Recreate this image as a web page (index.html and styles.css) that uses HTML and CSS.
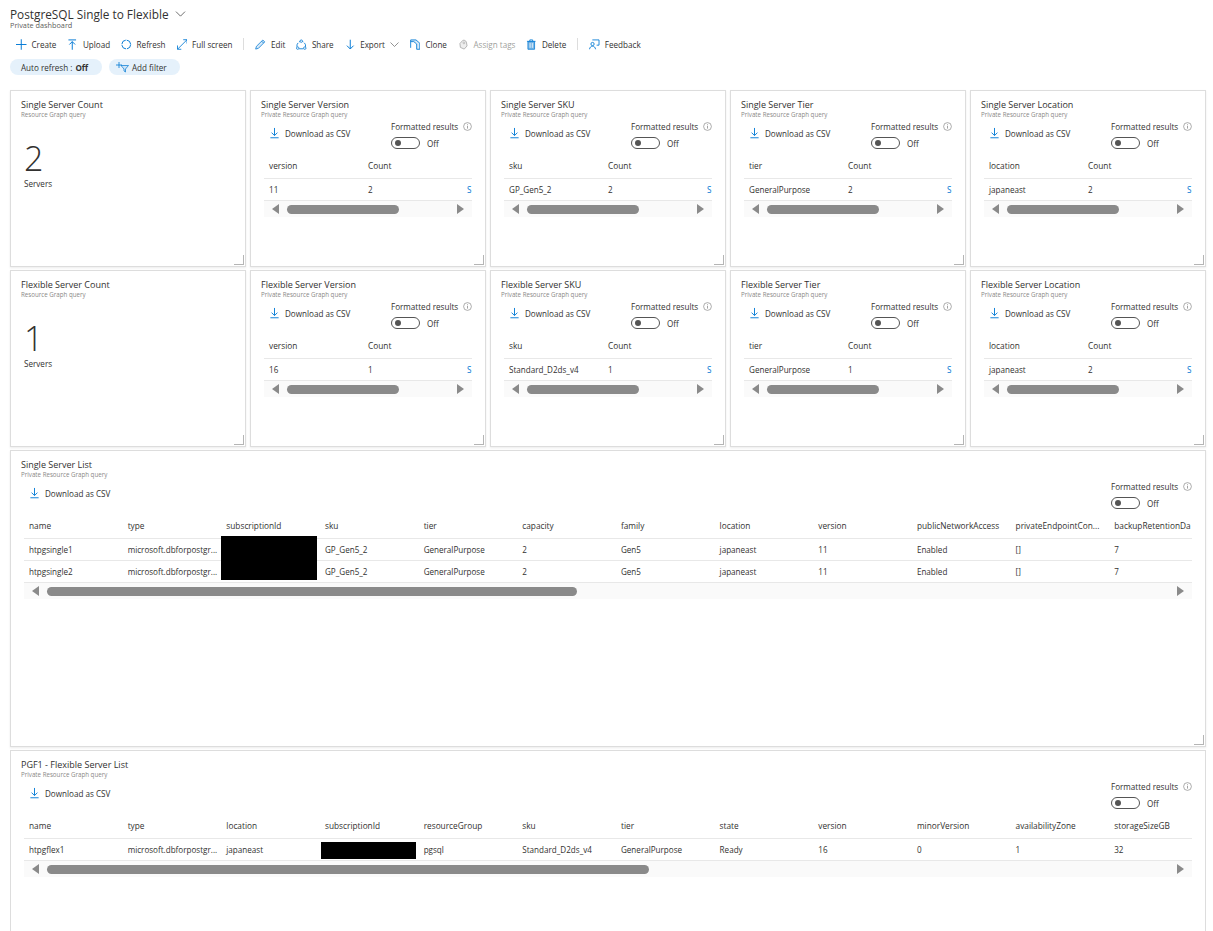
FILE: index.html
```html
<!DOCTYPE html>
<html lang="en">
<head>
    <meta charset="UTF-8">
    <title>PostgreSQL Single to Flexible</title>
    <link rel="stylesheet" href="styles.css">
</head>
<body>
    <svg class="defs" width="0" height="0">
        <symbol id="i-download" viewBox="0 0 12 12"><path d="M6 .5v8M2.800 5.600 6 8.800l3.200-3.200M1.500 11.200h9" fill="none" stroke="#0078d4"/></symbol>
        <symbol id="i-info" viewBox="0 0 9 9"><circle cx="4.500" cy="4.500" r="3.900" fill="none" stroke="#8a8a8a" stroke-width=".7"/><path d="M4.500 3.800v2.800M4.500 2.300v.8" stroke="#8a8a8a" stroke-width=".8"/></symbol>
    </svg>

    <header class="title-row">
        <h1>PostgreSQL Single to Flexible</h1>
        <svg class="title-chevron" viewBox="0 0 12 7"><path d="M.7.7 6 6l5.300-5.300" fill="none" stroke="#444" stroke-width=".9"/></svg>
    </header>
    <div class="subtitle">Private dashboard</div>

    <nav class="toolbar">
        <a><svg viewBox="0 0 11 11"><path d="M5.500 0v11M0 5.500h11" stroke="#0078d4"/></svg>Create</a>
        <a><svg viewBox="0 0 11 11"><path d="M1.500.7h8M5.500 11V2.500M2.500 5.500l3-3 3 3" fill="none" stroke="#0078d4"/></svg>Upload</a>
        <a><svg viewBox="0 0 11 11"><circle cx="5.500" cy="5.500" r="4.600" fill="none" stroke="#0078d4" stroke-dasharray="6.200 1"/></svg>Refresh</a>
        <a><svg viewBox="0 0 11 11"><path d="M.5 10.500 10.500.5M6.500.5h4v4M.5 6.500v4h4" fill="none" stroke="#0078d4" stroke-width=".9"/></svg>Full screen</a>
        <span class="sep"></span>
        <a><svg viewBox="0 0 11 11"><path d="M.7 10.300 1.500 7.400 8.200.8l2 2-6.600 6.700zM7 2l2 2" fill="#d6e9f8" stroke="#0078d4" stroke-width=".8"/></svg>Edit</a>
        <a><svg viewBox="0 0 11 11"><path d="M3.300 2.800a3 3 0 0 1 4.400 0M1 8a4.800 4.800 0 0 1 1.200-4.200M10 8a4.800 4.800 0 0 0-1.200-4.200M3.300 10h4.400" fill="none" stroke="#0078d4" stroke-width=".9"/><circle cx="5.500" cy="2" r="1.300" fill="#fff" stroke="#0078d4" stroke-width=".8"/><circle cx="1.800" cy="9.300" r="1.300" fill="#fff" stroke="#0078d4" stroke-width=".8"/><circle cx="9.200" cy="9.300" r="1.300" fill="#fff" stroke="#0078d4" stroke-width=".8"/></svg>Share</a>
        <a class="has-caret"><svg viewBox="0 0 11 11"><path d="M5.500.5v9.500M2 6.700l3.500 3.500L9 6.700" fill="none" stroke="#0078d4"/></svg>Export<svg class="caret" viewBox="0 0 9 5"><path d="M.5.5l4 4 4-4" fill="none" stroke="#777" stroke-width=".8"/></svg></a>
        <a><svg viewBox="0 0 11 11"><path d="M.7 9V.7h5.600l4 3.500v6.300H7V5L4 2.500H.7" fill="#d6e9f8" stroke="#0078d4" stroke-width=".9"/></svg>Clone</a>
        <a class="disabled"><svg viewBox="0 0 11 11"><path d="M2 4.500 5 1.200c1.500-.6 3.200.2 3.800 1.800L9.500 7 6.500 10.300 2.500 8.500z" fill="#eee" stroke="#aaa" stroke-width=".9"/><circle cx="6.200" cy="3.800" r="1" fill="none" stroke="#aaa" stroke-width=".7"/></svg>Assign tags</a>
        <a><svg viewBox="0 0 11 11"><path d="M1 2.200h9M4 2V.7h3V2" fill="none" stroke="#0078d4" stroke-width=".9"/><path d="M2 2.500h7v8H2z" fill="#7fb9e6" stroke="#0078d4" stroke-width=".8"/><path d="M4.300 4v5M6.700 4v5" stroke="#fff" stroke-width=".7"/></svg>Delete</a>
        <span class="sep"></span>
        <a><svg viewBox="0 0 11 11"><path d="M3.500.7h7v5.500H8" fill="none" stroke="#0078d4" stroke-width=".9"/><circle cx="3.700" cy="5" r="1.700" fill="#fff" stroke="#0078d4" stroke-width=".9"/><path d="M.5 10.500c.4-2.200 1.600-3.200 3.200-3.200s2.800 1 3.200 3.200" fill="none" stroke="#0078d4" stroke-width=".9"/></svg>Feedback</a>
    </nav>

    <div class="filters">
        <span class="pill pill-refresh"><span>Auto refresh :</span><b>Off</b></span>
        <span class="pill pill-filter"><svg viewBox="0 0 13 11"><path d="M5 3.500h7.500L9.500 7v3L8 9V7z" fill="#cfe4f6" stroke="#0078d4" stroke-width=".7"/><path d="M3 0v6M0 3h6" stroke="#0078d4" stroke-width=".8"/></svg>Add filter</span>
    </div>

    <main class="board">
        <section class="tile">
            <h2>Single Server Count</h2>
            <div class="tile-sub">Resource Graph query</div>
            <div class="stat">2</div>
            <div class="stat-unit">Servers</div>
        </section>

        <section class="tile">
            <h2>Single Server Version</h2>
            <div class="tile-sub">Private Resource Graph query</div>
            <div class="actions">
                <a class="download"><svg><use href="#i-download"/></svg>Download as CSV</a>
                <div class="format">
                    <div>Formatted results <svg class="info"><use href="#i-info"/></svg></div>
                    <div class="format-toggle"><span class="toggle"></span>Off</div>
                </div>
            </div>
            <div class="table-wrap">
                <table class="small-table">
                    <tr><th>version</th><th>Count</th><th></th></tr>
                    <tr><td>11</td><td>2</td><td class="link">S</td></tr>
                </table>
            </div>
            <div class="hscroll"><i class="arrow-l"></i><span class="thumb thumb-small"></span><i class="arrow-r"></i></div>
        </section>

        <section class="tile">
            <h2>Single Server SKU</h2>
            <div class="tile-sub">Private Resource Graph query</div>
            <div class="actions">
                <a class="download"><svg><use href="#i-download"/></svg>Download as CSV</a>
                <div class="format">
                    <div>Formatted results <svg class="info"><use href="#i-info"/></svg></div>
                    <div class="format-toggle"><span class="toggle"></span>Off</div>
                </div>
            </div>
            <div class="table-wrap">
                <table class="small-table">
                    <tr><th>sku</th><th>Count</th><th></th></tr>
                    <tr><td>GP_Gen5_2</td><td>2</td><td class="link">S</td></tr>
                </table>
            </div>
            <div class="hscroll"><i class="arrow-l"></i><span class="thumb thumb-small"></span><i class="arrow-r"></i></div>
        </section>

        <section class="tile">
            <h2>Single Server Tier</h2>
            <div class="tile-sub">Private Resource Graph query</div>
            <div class="actions">
                <a class="download"><svg><use href="#i-download"/></svg>Download as CSV</a>
                <div class="format">
                    <div>Formatted results <svg class="info"><use href="#i-info"/></svg></div>
                    <div class="format-toggle"><span class="toggle"></span>Off</div>
                </div>
            </div>
            <div class="table-wrap">
                <table class="small-table">
                    <tr><th>tier</th><th>Count</th><th></th></tr>
                    <tr><td>GeneralPurpose</td><td>2</td><td class="link">S</td></tr>
                </table>
            </div>
            <div class="hscroll"><i class="arrow-l"></i><span class="thumb thumb-small"></span><i class="arrow-r"></i></div>
        </section>

        <section class="tile">
            <h2>Single Server Location</h2>
            <div class="tile-sub">Private Resource Graph query</div>
            <div class="actions">
                <a class="download"><svg><use href="#i-download"/></svg>Download as CSV</a>
                <div class="format">
                    <div>Formatted results <svg class="info"><use href="#i-info"/></svg></div>
                    <div class="format-toggle"><span class="toggle"></span>Off</div>
                </div>
            </div>
            <div class="table-wrap">
                <table class="small-table">
                    <tr><th>location</th><th>Count</th><th></th></tr>
                    <tr><td>japaneast</td><td>2</td><td class="link">S</td></tr>
                </table>
            </div>
            <div class="hscroll"><i class="arrow-l"></i><span class="thumb thumb-small"></span><i class="arrow-r"></i></div>
        </section>

        <section class="tile">
            <h2>Flexible Server Count</h2>
            <div class="tile-sub">Resource Graph query</div>
            <div class="stat">1</div>
            <div class="stat-unit">Servers</div>
        </section>

        <section class="tile">
            <h2>Flexible Server Version</h2>
            <div class="tile-sub">Private Resource Graph query</div>
            <div class="actions">
                <a class="download"><svg><use href="#i-download"/></svg>Download as CSV</a>
                <div class="format">
                    <div>Formatted results <svg class="info"><use href="#i-info"/></svg></div>
                    <div class="format-toggle"><span class="toggle"></span>Off</div>
                </div>
            </div>
            <div class="table-wrap">
                <table class="small-table">
                    <tr><th>version</th><th>Count</th><th></th></tr>
                    <tr><td>16</td><td>1</td><td class="link">S</td></tr>
                </table>
            </div>
            <div class="hscroll"><i class="arrow-l"></i><span class="thumb thumb-small"></span><i class="arrow-r"></i></div>
        </section>

        <section class="tile">
            <h2>Flexible Server SKU</h2>
            <div class="tile-sub">Private Resource Graph query</div>
            <div class="actions">
                <a class="download"><svg><use href="#i-download"/></svg>Download as CSV</a>
                <div class="format">
                    <div>Formatted results <svg class="info"><use href="#i-info"/></svg></div>
                    <div class="format-toggle"><span class="toggle"></span>Off</div>
                </div>
            </div>
            <div class="table-wrap">
                <table class="small-table">
                    <tr><th>sku</th><th>Count</th><th></th></tr>
                    <tr><td>Standard_D2ds_v4</td><td>1</td><td class="link">S</td></tr>
                </table>
            </div>
            <div class="hscroll"><i class="arrow-l"></i><span class="thumb thumb-small"></span><i class="arrow-r"></i></div>
        </section>

        <section class="tile">
            <h2>Flexible Server Tier</h2>
            <div class="tile-sub">Private Resource Graph query</div>
            <div class="actions">
                <a class="download"><svg><use href="#i-download"/></svg>Download as CSV</a>
                <div class="format">
                    <div>Formatted results <svg class="info"><use href="#i-info"/></svg></div>
                    <div class="format-toggle"><span class="toggle"></span>Off</div>
                </div>
            </div>
            <div class="table-wrap">
                <table class="small-table">
                    <tr><th>tier</th><th>Count</th><th></th></tr>
                    <tr><td>GeneralPurpose</td><td>1</td><td class="link">S</td></tr>
                </table>
            </div>
            <div class="hscroll"><i class="arrow-l"></i><span class="thumb thumb-small"></span><i class="arrow-r"></i></div>
        </section>

        <section class="tile">
            <h2>Flexible Server Location</h2>
            <div class="tile-sub">Private Resource Graph query</div>
            <div class="actions">
                <a class="download"><svg><use href="#i-download"/></svg>Download as CSV</a>
                <div class="format">
                    <div>Formatted results <svg class="info"><use href="#i-info"/></svg></div>
                    <div class="format-toggle"><span class="toggle"></span>Off</div>
                </div>
            </div>
            <div class="table-wrap">
                <table class="small-table">
                    <tr><th>location</th><th>Count</th><th></th></tr>
                    <tr><td>japaneast</td><td>2</td><td class="link">S</td></tr>
                </table>
            </div>
            <div class="hscroll"><i class="arrow-l"></i><span class="thumb thumb-small"></span><i class="arrow-r"></i></div>
        </section>

        <section class="tile tile-wide">
            <h2>Single Server List</h2>
            <div class="tile-sub">Private Resource Graph query</div>
            <div class="actions">
                <a class="download"><svg><use href="#i-download"/></svg>Download as CSV</a>
                <div class="format">
                    <div>Formatted results <svg class="info"><use href="#i-info"/></svg></div>
                    <div class="format-toggle"><span class="toggle"></span>Off</div>
                </div>
            </div>
            <div class="table-wrap">
                <table class="wide-table">
                    <tr><th>name</th><th>type</th><th>subscriptionId</th><th>sku</th><th>tier</th><th>capacity</th><th>family</th><th>location</th><th>version</th><th>publicNetworkAccess</th><th>privateEndpointCon...</th><th>backupRetentionDa</th></tr>
                    <tr><td>htpgsingle1</td><td>microsoft.dbforpostgr...</td><td></td><td>GP_Gen5_2</td><td>GeneralPurpose</td><td>2</td><td>Gen5</td><td>japaneast</td><td>11</td><td>Enabled</td><td>[]</td><td>7</td></tr>
                    <tr><td>htpgsingle2</td><td>microsoft.dbforpostgr...</td><td></td><td>GP_Gen5_2</td><td>GeneralPurpose</td><td>2</td><td>Gen5</td><td>japaneast</td><td>11</td><td>Enabled</td><td>[]</td><td>7</td></tr>
                </table>
                <div class="redact redact-single"></div>
            </div>
            <div class="hscroll"><i class="arrow-l"></i><span class="thumb thumb-single"></span><i class="arrow-r"></i></div>
        </section>

        <section class="tile tile-wide tile-cut">
            <h2>PGF1 - Flexible Server List</h2>
            <div class="tile-sub">Private Resource Graph query</div>
            <div class="actions">
                <a class="download"><svg><use href="#i-download"/></svg>Download as CSV</a>
                <div class="format">
                    <div>Formatted results <svg class="info"><use href="#i-info"/></svg></div>
                    <div class="format-toggle"><span class="toggle"></span>Off</div>
                </div>
            </div>
            <div class="table-wrap">
                <table class="wide-table">
                    <tr><th>name</th><th>type</th><th>location</th><th>subscriptionId</th><th>resourceGroup</th><th>sku</th><th>tier</th><th>state</th><th>version</th><th>minorVersion</th><th>availabilityZone</th><th>storageSizeGB</th></tr>
                    <tr><td>htpgflex1</td><td>microsoft.dbforpostgr...</td><td>japaneast</td><td></td><td>pgsql</td><td>Standard_D2ds_v4</td><td>GeneralPurpose</td><td>Ready</td><td>16</td><td>0</td><td>1</td><td>32</td></tr>
                </table>
                <div class="redact redact-flex"></div>
            </div>
            <div class="hscroll"><i class="arrow-l"></i><span class="thumb thumb-flex"></span><i class="arrow-r"></i></div>
        </section>
    </main>
</body>
</html>
```

FILE: styles.css
```css
html, body {
    height: 931px;
    overflow: hidden;
}
body {
    margin: 0;
    padding: 0;
    background: #ffffff;
    color: #323130;
    font-family: "Open Sans", "Noto Sans", sans-serif;
    font-size: 8.1px;
}
.defs {
    position: absolute;
}
.title-row {
    display: flex;
    align-items: center;
    gap: 6px;
    height: 15px;
    padding: 6px 0 0 10px;
}
h1 {
    margin: 0;
    font-size: 11.8px;
    font-weight: 400;
    white-space: nowrap;
}
.title-chevron {
    width: 11px;
    height: 6px;
}
.subtitle {
    padding-left: 10px;
    font-size: 7.3px;
    line-height: 9px;
    color: #605e5c;
}
.toolbar {
    display: flex;
    align-items: center;
    gap: 11px;
    height: 20px;
    margin-top: 4px;
    padding-left: 16px;
}
.toolbar a {
    display: flex;
    align-items: center;
    gap: 5px;
    white-space: nowrap;
}
.toolbar svg {
    width: 10.5px;
    height: 11px;
}
.toolbar .caret {
    width: 9px;
    height: 5px;
}
.toolbar .disabled {
    color: #a19f9d;
}
.sep {
    width: 1px;
    height: 12px;
    background: #dddddd;
}
.filters {
    display: flex;
    gap: 7px;
    height: 16px;
    margin-top: 5px;
    padding-left: 10px;
}
.pill {
    display: flex;
    align-items: center;
    gap: 3px;
    border-radius: 8px;
    background: #e5f1fb;
    white-space: nowrap;
}
.pill b {
    font-weight: 700;
}
.pill-refresh {
    width: 92px;
    box-sizing: border-box;
    padding-left: 11px;
}
.pill-filter {
    width: 71px;
    box-sizing: border-box;
    padding-left: 7px;
}
.pill svg {
    width: 13px;
    height: 11px;
}
.board {
    display: grid;
    grid-template-columns: repeat(5, 236px);
    grid-template-rows: 177px 177px 297px 181px;
    gap: 3px 4px;
    margin-top: 15px;
    padding-left: 10px;
}
.tile {
    position: relative;
    box-sizing: border-box;
    padding: 9px 13px 0;
    border: 1px solid #dddddd;
    box-shadow: 0 1px 2px rgba(0, 0, 0, 0.08);
    background: #ffffff;
}
/* resize handle */
.tile::after {
    content: "";
    position: absolute;
    right: 1px;
    bottom: 1px;
    width: 9px;
    height: 9px;
    border-right: 1px solid #b5b5b5;
    border-bottom: 1px solid #b5b5b5;
}
.tile-wide {
    grid-column: 1 / -1;
}
/* the last tile runs on below the window */
.tile-cut {
    border-bottom: none;
    box-shadow: none;
}
.tile-cut::after {
    display: none;
}
h2 {
    margin: 0 0 0 -3px;
    font-size: 9px;
    line-height: 9px;
    font-weight: 400;
}
.tile-sub {
    margin-left: -3px;
    margin-top: 2px;
    font-size: 6.2px;
    line-height: 8px;
    color: #8a8886;
}
.stat {
    margin-top: 23px;
    font-size: 34px;
    line-height: 32px;
    font-weight: 300;
}
.stat-unit {
    margin-top: 4px;
}
.actions {
    display: flex;
    justify-content: space-between;
    height: 36px;
    margin-top: 2px;
}
.download {
    display: flex;
    align-items: center;
    gap: 5px;
    height: 12px;
    margin-top: 6px;
    padding-left: 5px;
    white-space: nowrap;
}
.download svg {
    width: 11px;
    height: 12px;
}
.format {
    width: 81px;
    margin-top: -1px;
    white-space: nowrap;
}
.format > div:first-child {
    display: flex;
    justify-content: space-between;
    align-items: center;
    height: 12px;
}
.info {
    width: 9px;
    height: 9px;
}
.format-toggle {
    display: flex;
    align-items: center;
    gap: 7px;
    margin-top: 5px;
    height: 12px;
}
.toggle {
    position: relative;
    box-sizing: border-box;
    width: 29px;
    height: 12px;
    border: 1px solid #555555;
    border-radius: 6px;
}
.toggle::before {
    content: "";
    position: absolute;
    left: 3px;
    top: 2px;
    width: 6px;
    height: 6px;
    border-radius: 50%;
    background: #555555;
}
.table-wrap {
    position: relative;
    overflow: hidden;
}
table {
    border-collapse: collapse;
    table-layout: fixed;
}
.small-table {
    width: 297px;
}
.wide-table {
    width: 1184px;
}
th, td {
    padding: 0 0 0 5px;
    height: 21px;
    border-bottom: 1px solid #e8e8e8;
    text-align: left;
    font-weight: 400;
    white-space: nowrap;
    overflow: hidden;
}
th {
    padding-bottom: 4px;
    height: 17px;
    font-size: 8.3px;
}
td.link {
    color: #0078d4;
}
.redact {
    position: absolute;
    background: #000000;
}
.redact-single {
    left: 197px;
    top: 19px;
    width: 96px;
    height: 44px;
}
.redact-flex {
    left: 297px;
    top: 25px;
    width: 95px;
    height: 17px;
}
.hscroll {
    display: flex;
    align-items: center;
    height: 16px;
    background: #fafafa;
}
.hscroll i {
    width: 0;
    height: 0;
    border-top: 5px solid transparent;
    border-bottom: 5px solid transparent;
}
.arrow-l {
    margin-left: 8px;
    border-right: 7px solid #8a8a8a;
}
.arrow-r {
    margin-left: auto;
    margin-right: 8px;
    border-left: 7px solid #8a8a8a;
}
.thumb {
    height: 9px;
    margin-left: 8px;
    border-radius: 5px;
    background: #8a8a8a;
}
.thumb-small {
    width: 112px;
}
.thumb-single {
    width: 530px;
}
.thumb-flex {
    width: 602px;
}
```
